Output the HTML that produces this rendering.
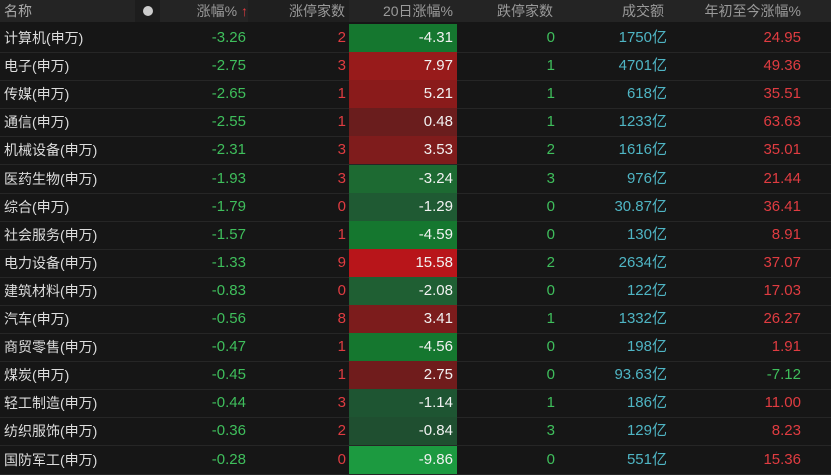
<!DOCTYPE html>
<html><head><meta charset="utf-8"><style>
body{margin:0;width:831px;height:474px;overflow:hidden;background:#161616;font-family:"Liberation Sans","Noto Sans CJK SC",sans-serif;font-size:14px;color:#d8d8d8}
.hd{position:absolute;left:0;top:0;width:831px;height:22px;background:#242424}
.hd div{position:absolute;top:0;height:22px;line-height:22px;color:#9a9a9a;font-size:14px}
.row{position:absolute;left:0;width:831px;height:28px;border-bottom:1px solid #262626}
.row div{position:absolute;top:0;height:28px;line-height:28px;text-align:right;font-size:15px}
.row .n{left:4px;text-align:left;color:#dcdcdc;font-size:14px}
.g{color:#3fbf5c}.r{color:#e03c41}.c{color:#4fb5c4}
.a{right:585px}.b{right:485px}.d{left:349px;width:104px;padding-right:4px;color:#f2f2f2}
.e{right:276px}.f{right:164px}.h{right:30px}
</style></head><body>
<div class="hd">
<div style="left:4px;color:#aaa">名称</div>
<div style="left:135px;width:25px;background:#1d1d1d"></div>
<div style="left:143px;top:6px;width:10px;height:10px;border-radius:5px;background:#ccc"></div>
<div style="right:583px">涨幅% <span style="color:#e03c41">↑</span></div>
<div style="left:248px;width:101px;background:#1f1f1f"></div>
<div style="right:486px">涨停家数</div>
<div style="right:378px">20日涨幅%</div>
<div style="right:278px">跌停家数</div>
<div style="right:167px">成交额</div>
<div style="right:30px">年初至今涨幅%</div>
</div>
<div id="t"></div>
<script>
var d=[["计算机(申万)","-3.26","2","-4.31","#15772f","0","1750亿","24.95"],
["电子(申万)","-2.75","3","7.97","#981b1b","1","4701亿","49.36"],
["传媒(申万)","-2.65","1","5.21","#8a1b1b","1","618亿","35.51"],
["通信(申万)","-2.55","1","0.48","#6a1d1d","1","1233亿","63.63"],
["机械设备(申万)","-2.31","3","3.53","#7f1c1c","2","1616亿","35.01"],
["医药生物(申万)","-1.93","3","-3.24","#1d6a32","3","976亿","21.44"],
["综合(申万)","-1.79","0","-1.29","#1f5a33","0","30.87亿","36.41"],
["社会服务(申万)","-1.57","1","-4.59","#15772f","0","130亿","8.91"],
["电力设备(申万)","-1.33","9","15.58","#b8151a","2","2634亿","37.07"],
["建筑材料(申万)","-0.83","0","-2.08","#1f5f33","0","122亿","17.03"],
["汽车(申万)","-0.56","8","3.41","#7c1c1c","1","1332亿","26.27"],
["商贸零售(申万)","-0.47","1","-4.56","#15772f","0","198亿","1.91"],
["煤炭(申万)","-0.45","1","2.75","#701c1c","0","93.63亿","-7.12"],
["轻工制造(申万)","-0.44","3","-1.14","#1e5532","1","186亿","11.00"],
["纺织服饰(申万)","-0.36","2","-0.84","#1f4f30","3","129亿","8.23"],
["国防军工(申万)","-0.28","0","-9.86","#1c9a40","0","551亿","15.36"]];
var h="";d.forEach(function(r,i){var y=(24+i*28.1).toFixed(1);
h+='<div class="row" style="top:'+y+'px"><div class="n">'+r[0]+'</div><div class="a g">'+r[1]+'</div><div class="b r">'+r[2]+'</div><div class="d" style="background:'+r[4]+'">'+r[3]+'</div><div class="e g">'+r[5]+'</div><div class="f c">'+r[6]+'</div><div class="h '+(r[7][0]=="-"?"g":"r")+'">'+r[7]+'</div></div>';});
document.getElementById("t").innerHTML=h;
</script>
</body></html>
